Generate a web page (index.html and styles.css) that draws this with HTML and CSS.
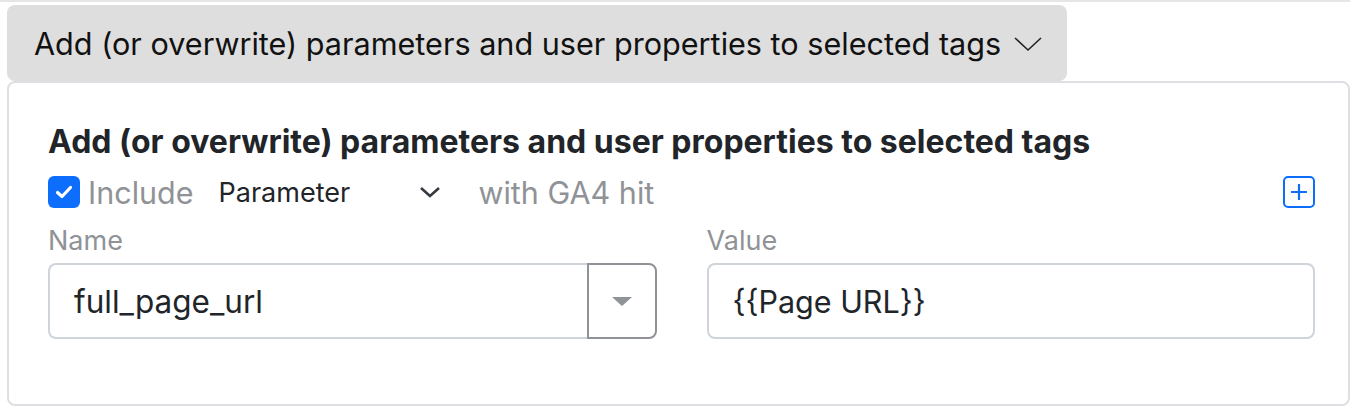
FILE: index.html
```html
<!DOCTYPE html>
<html>
<head>
<meta charset="utf-8">
<link rel="stylesheet" href="styles.css">
</head>
<body>
<div class="page">
  <button class="toggle">
    <span>Add (or overwrite) parameters and user properties to selected tags</span>
    <svg class="toggle-chev" width="30" height="16" viewBox="0 0 30 16"><path d="M2 2 L15 14 L28 2" fill="none" stroke="#222" stroke-width="1.6"/></svg>
  </button>
  <div class="panel">
    <h2 class="title">Add (or overwrite) parameters and user properties to selected tags</h2>
    <div class="row">
      <span class="check"><svg width="20" height="16" viewBox="0 0 20 16"><path d="M3.5 8.5 L8 12.5 L16.5 3.5" fill="none" stroke="#fff" stroke-width="3.2" stroke-linecap="round" stroke-linejoin="round"/></svg></span>
      <span class="muted big include">Include</span>
      <span class="select">
        <span>Parameter</span>
        <svg width="22" height="14" viewBox="0 0 22 14"><path d="M2 3 L11 11 L20 3" fill="none" stroke="#343a40" stroke-width="2.6"/></svg>
      </span>
      <span class="muted big with">with GA4 hit</span>
      <span class="plus"><svg width="20" height="20" viewBox="0 0 20 20"><path d="M10 2 V18 M2 10 H18" stroke="#0d6efd" stroke-width="2.2"/></svg></span>
    </div>
    <div class="fields">
      <div class="field">
        <label class="label">Name</label>
        <div class="group">
          <div class="input grouped">full_page_url</div>
          <div class="drop"><span class="caret"></span></div>
        </div>
      </div>
      <div class="field">
        <label class="label">Value</label>
        <div class="input value">{{Page URL}}</div>
      </div>
    </div>
  </div>
</div>
</body>
</html>
```
FILE: styles.css
```css
* { box-sizing: border-box; }
body {
  margin: 0;
  font-family: Inter, "Noto Sans", sans-serif;
  color: #212529;
  background: #fff;
}
.page {
  width: 1350px;
  border-top: 2px solid #e6e6e6;
  padding-top: 3px;
}
.toggle {
  margin-left: 7px;
  width: 1060px;
  height: 76px;
  background: #dedede;
  border: none;
  border-radius: 8px;
  display: flex;
  align-items: center;
  gap: 12px;
  padding: 0 0 0 27px;
  font-family: inherit;
  font-size: 30.6px;
  color: #111;
}
.toggle-chev { margin-top: 2px; }
.panel {
  margin-left: 7px;
  height: 325px;
  border: 2px solid #dddfe2;
  border-radius: 8px;
  padding: 38px 33px 0 39px;
}
.title {
  margin: 0;
  font-size: 32px;
  font-weight: 700;
  line-height: 42px;
}
.row {
  display: flex;
  align-items: center;
  height: 44px;
  margin-top: 7px;
}
.check {
  width: 32px;
  height: 32px;
  border-radius: 6px;
  background: #0d6efd;
  display: flex;
  align-items: center;
  justify-content: center;
}
.muted { color: #8f9296; }
.big { font-size: 30.5px; }
.include { margin-left: 8px; }
.select {
  display: flex;
  align-items: center;
  width: 222px;
  margin-left: 25px;
  font-size: 27px;
  justify-content: space-between;
}
.with { margin-left: 38px; }
.plus {
  margin-left: auto;
  width: 32px;
  height: 32px;
  border: 2px solid #0d6efd;
  border-radius: 5px;
  display: flex;
  align-items: center;
  justify-content: center;
}
.fields {
  display: grid;
  grid-template-columns: 1fr 1fr;
  column-gap: 50px;
  margin-top: 10px;
}
.label {
  display: block;
  font-size: 27px;
  color: #8f9296;
  line-height: 34px;
  margin-bottom: 5px;
}
.group { display: flex; }
.input {
  height: 76px;
  border: 2px solid #ced4da;
  border-radius: 8px;
  padding: 0 24px;
  display: flex;
  align-items: center;
  font-size: 31.5px;
  color: #212529;
}
.value { font-size: 30.5px; }
.grouped {
  flex: 1;
  border-right: none;
  border-radius: 8px 0 0 8px;
}
.drop {
  width: 70px;
  height: 76px;
  border: 2px solid #8f9296;
  border-radius: 0 8px 8px 0;
  display: flex;
  align-items: center;
  justify-content: center;
}
.caret {
  width: 0;
  height: 0;
  border-left: 10px solid transparent;
  border-right: 10px solid transparent;
  border-top: 9px solid #8f9296;
}
```
